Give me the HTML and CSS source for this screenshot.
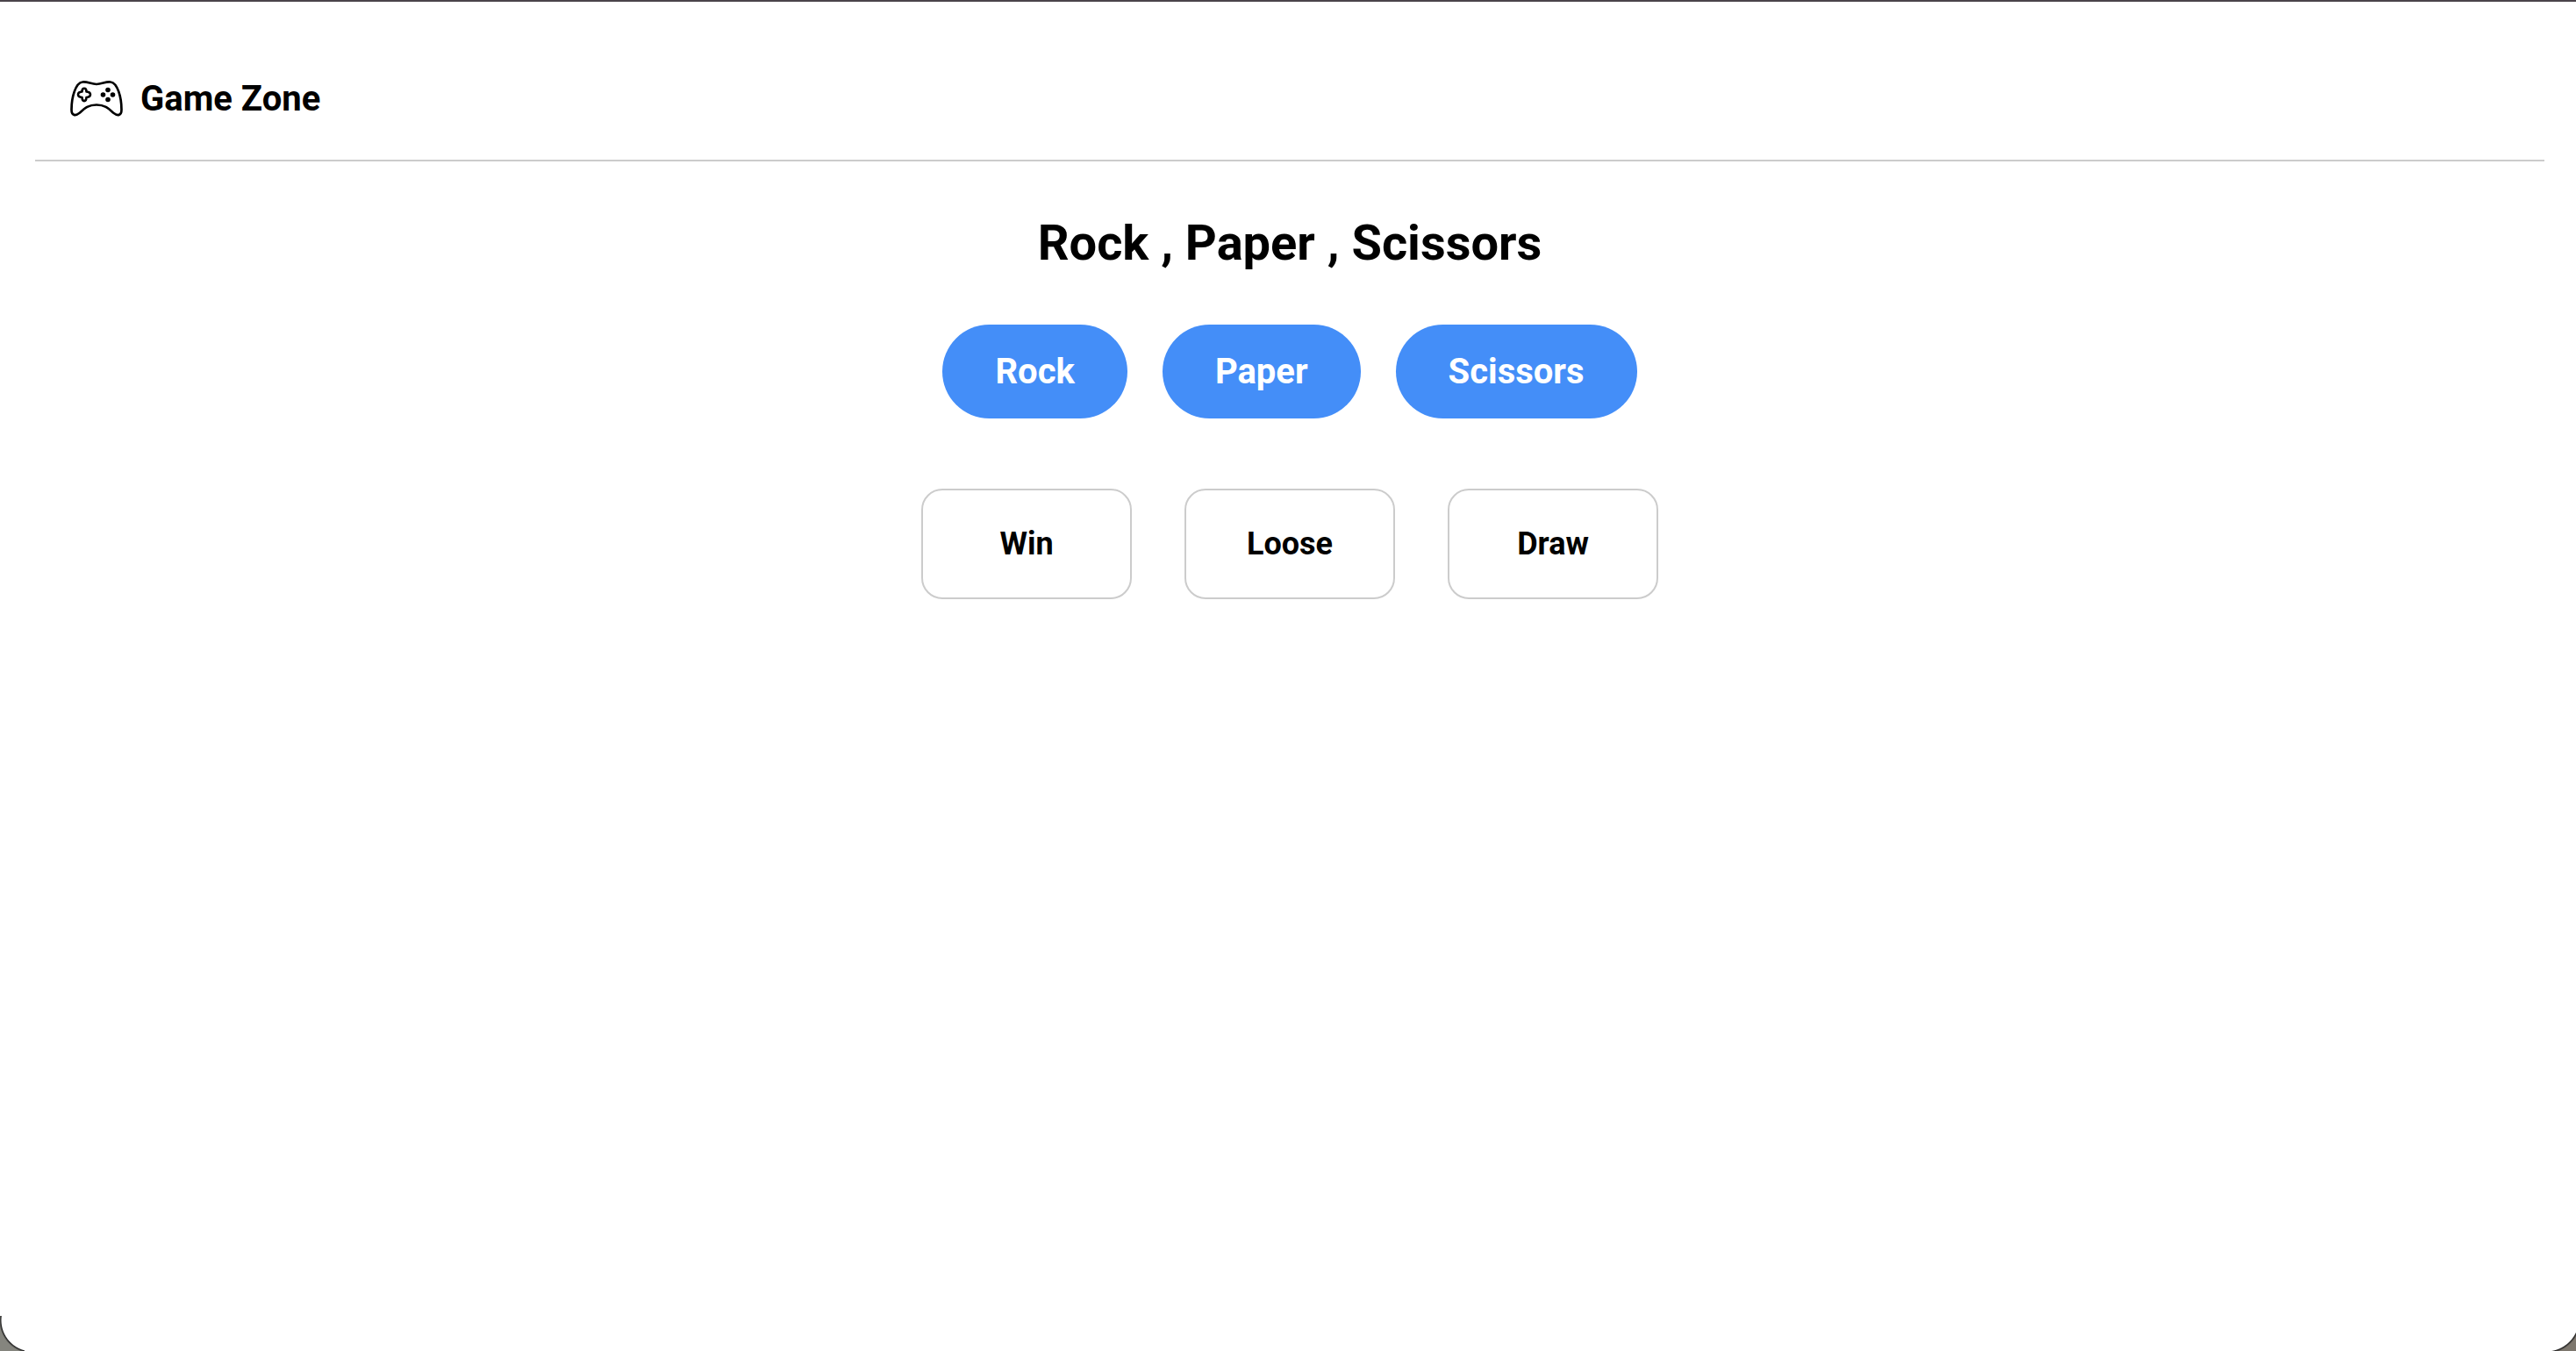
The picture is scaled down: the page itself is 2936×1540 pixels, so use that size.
FILE: index.html
```html
<!DOCTYPE html>
<html lang="en">
<head>
  <meta charset="utf-8">
  <meta name="viewport" content="width=device-width, initial-scale=1">
  <title>Game Zone</title>
  <link rel="stylesheet" href="styles.css">
</head>
<body>
  <header class="site-header">
    <svg class="logo" viewBox="0 0 60 60" fill="none" stroke="#000" stroke-width="2.7" stroke-linejoin="round" aria-hidden="true">
      <path d="M14 11.500C19 10.500 24 14 30 14S41 10.500 46 11.500C54 12.500 58.500 29 58.500 43C58.500 50 54 50.500 49 46.500C43 41 39 37.500 30 37.500S17 41 11 46.500C6 50.500 1.500 50 1.500 43C1.500 29 6 12.500 14 11.500Z"/>
      <path stroke-width="2.6" d="M13.500 22.500C13.500 17.500 18.500 17.500 18.500 22.500C24.500 23 24.500 28.500 18.500 29C18.500 34.500 13.500 34.500 13.500 29C7.500 28.500 7.500 23 13.500 22.500Z"/>
      <g fill="#000" stroke="none"><circle cx="43" cy="20.500" r="2.800"/><circle cx="37.500" cy="26" r="2.800"/><circle cx="48.500" cy="26" r="2.800"/><circle cx="43" cy="31.500" r="2.800"/></g>
    </svg>
    <span class="brand">Game Zone</span>
  </header>
  <main class="game">
    <h1 class="title">Rock , Paper , Scissors</h1>
    <div class="choices">
      <button class="choice" type="button">Rock</button>
      <button class="choice" type="button">Paper</button>
      <button class="choice" type="button">Scissors</button>
    </div>
    <div class="results">
      <div class="result">Win</div>
      <div class="result">Loose</div>
      <div class="result">Draw</div>
    </div>
  </main>
</body>
</html>
```

FILE: styles.css
```css
* {
  box-sizing: border-box;
}

body {
  margin: 0;
  min-height: 100vh;
  padding: 0 36px 0 40px;
  border-top: 2px solid #4a444a;
  background: #fff;
  color: #000;
  font-family: Roboto, sans-serif;
  font-weight: 700;
}

/* Rounded lower corners of the window frame */
body::before,
body::after {
  content: "";
  position: fixed;
  bottom: 0;
  width: 28px;
  height: 40px;
}

body::before {
  left: 0;
  background: radial-gradient(circle at 37px 5px, transparent 35px, #222 36px, #85857e 38px);
}

body::after {
  right: 0;
  background: radial-gradient(circle at -6px 3px, transparent 37px, #222 38px, #7d776e 40px);
}

.site-header {
  display: flex;
  align-items: center;
  gap: 20px;
  padding: 80px 40px 40px;
  border-bottom: 2px solid #ccc;
}

.logo {
  width: 60px;
  height: 60px;
}

.brand {
  font-size: 40px;
  line-height: 47px;
}

.game {
  display: flex;
  flex-direction: column;
  align-items: center;
}

.title {
  margin: 60px 0;
  font-size: 56px;
  line-height: 66px;
}

.choices {
  display: flex;
  gap: 40px;
}

.choice {
  padding: 30px 60px;
  border: 0;
  border-radius: 60px;
  background: #448ef8;
  color: #fff;
  font: inherit;
  font-size: 40px;
  line-height: 47px;
  cursor: pointer;
}

.results {
  display: flex;
  gap: 60px;
  margin-top: 80px;
}

.result {
  width: 240px;
  padding: 40px 0;
  border: 2px solid #ccc;
  border-radius: 24px;
  font-size: 36px;
  line-height: 42px;
  text-align: center;
}
```
